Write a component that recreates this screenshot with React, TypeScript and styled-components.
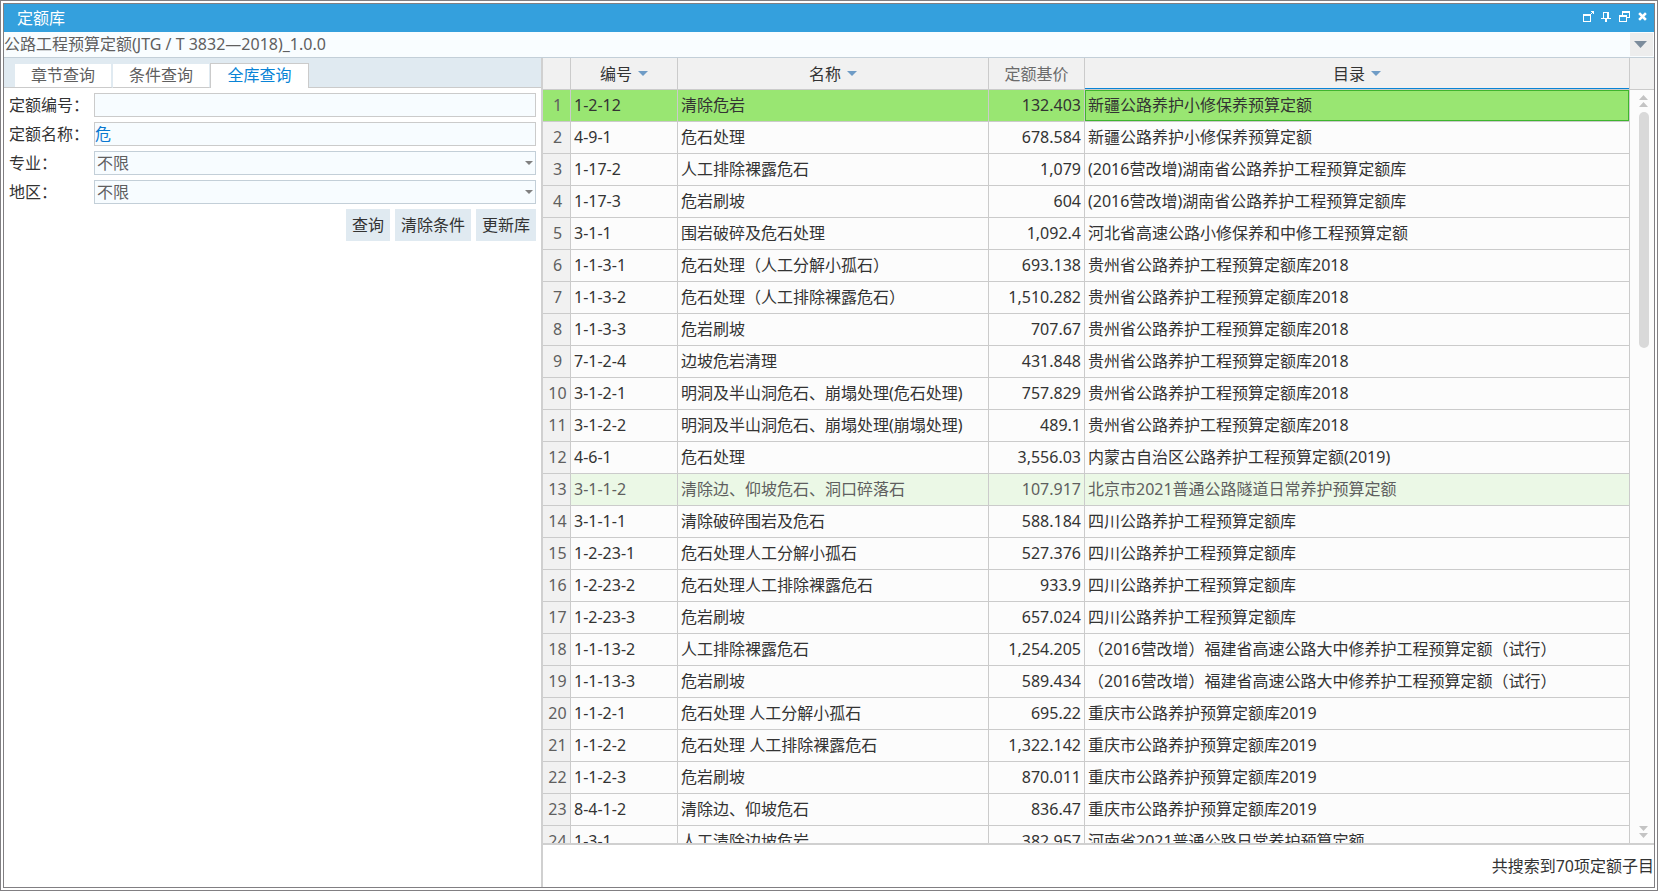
import React, { useState } from "react";
import styled, { createGlobalStyle, css } from "styled-components";

const GlobalStyle = createGlobalStyle`
  *, *::before, *::after { box-sizing: border-box; }
  html, body, #root { height: 100%; }
  body {
    margin: 0;
    background: #fff;
    color: #333;
    font: 16px/24px "Noto Sans", "Noto Sans CJK SC", sans-serif;
  }
  button, input, select { font: inherit; color: inherit; }
`;

const OuterFrame = styled.div`
  height: 100%;
  padding: 2px;
  border: 1px solid #817f82;
`;

const Window = styled.main`
  display: flex;
  flex-direction: column;
  height: 100%;
  border: 1px solid #817f82;
`;

const TitleBar = styled.header`
  display: flex;
  align-items: center;
  justify-content: space-between;
  flex: none;
  height: 28px;
  padding: 0 5px 0 13px;
  background: #34a0dd;
  color: #fff;
`;

const Title = styled.h1`
  margin: 0;
  font-size: 16px;
  font-weight: 400;
`;

const WindowButtons = styled.div`
  display: flex;
  gap: 6px;
  padding-bottom: 2px;
`;

const WindowButton = styled.button`
  display: block;
  width: 12px;
  height: 12px;
  padding: 0;
  border: 0;
  background: none;

  svg { display: block; }
`;

const LibraryPicker = styled.div`
  display: flex;
  flex: none;
  height: 26px;
  padding: 1px 1px 1px 0;
  border-bottom: 1px solid #c3cfd8;
  background: #f9fdff;
`;

const LibrarySelect = styled.select`
  flex: 1;
  height: 23px;
  padding: 0;
  border: 0;
  background: none;
  color: #5f5f5f;
  line-height: 23px;
  appearance: none;
  outline: none;
`;

const PickerButton = styled.button`
  display: grid;
  place-items: center;
  width: 23px;
  height: 23px;
  padding: 0 2px 0 0;
  border: 0;
  background: #ededed;
`;

const Body = styled.div`
  display: grid;
  grid-template-columns: minmax(0, 537fr) 2px minmax(0, 1111fr);
  flex: 1;
  min-height: 0;
`;

const Splitter = styled.div`
  background: #d0d0d0;
`;

const QueryPanel = styled.section`
  min-width: 0;
  background: #fff;
`;

const TabList = styled.div`
  display: flex;
  align-items: flex-end;
  height: 30px;
  padding-left: 11px;
  background: #e0eaf1;
  box-shadow: inset 0 -1px #cbcbcb;
`;

const Tab = styled.button<{ $active: boolean }>`
  width: 98px;
  height: 24px;
  padding: 0 0 2px;
  border: 0;
  border-right: 2px solid #e0eaf1;
  border-bottom: 1px solid #cbcbcb;
  background: #fff;
  color: #5f5f5f;
  line-height: 20px;

  ${(p) =>
    p.$active &&
    css`
      width: 99px;
      height: 25px;
      margin-left: -1px;
      border: 1px solid #cbcbcb;
      border-bottom: 0;
      color: #0a84d6;
    `}
`;

const QueryForm = styled.form`
  display: flex;
  flex-direction: column;
  gap: 5px;
  padding: 5px 5px 0;
`;

const Field = styled.div`
  display: flex;
  align-items: center;
`;

const FieldLabel = styled.label`
  flex: none;
  width: 85px;
`;

const control = css`
  width: 100%;
  height: 24px;
  border: 1px solid #cbcbcb;
  border-radius: 0;
  background: #f7fcff;
  outline: none;
`;

const TextBox = styled.input`
  ${control}
  padding: 0;
  color: #0a78d0;
`;

const SelectWrap = styled.div`
  position: relative;
  flex: 1;

  svg {
    position: absolute;
    top: 10px;
    right: 3px;
    pointer-events: none;
  }
`;

const SelectBox = styled.select`
  ${control}
  display: block;
  padding: 0 16px 0 2px;
  border-color: #c3cfd8;
  color: #5f5f5f;
  line-height: 22px;
  appearance: none;
`;

const Actions = styled.div`
  display: flex;
  justify-content: flex-end;
  gap: 5px;
`;

const ActionButton = styled.button`
  height: 32px;
  padding: 0 6px;
  border: 0;
  background: #e0eaf1;
`;

const ResultPanel = styled.section`
  display: flex;
  flex-direction: column;
  min-width: 0;
  min-height: 0;
`;

const ResultArea = styled.div`
  display: flex;
  flex: 1;
  min-height: 0;
  border-bottom: 2px solid #d0d0d0;
  background: #fcfcfc;
`;

const TableViewport = styled.div`
  flex: 1;
  min-width: 0;
  overflow: hidden;
`;

const Table = styled.table`
  width: 100%;
  border-collapse: separate;
  border-spacing: 0;
  table-layout: fixed;
`;

const HeadCell = styled.th<{ $muted?: boolean; $sorted?: boolean }>`
  height: 32px;
  padding: 0;
  border-right: 1px solid #cbcbcb;
  border-bottom: 1px solid #cbcbcb;
  background: #f1f1f1;
  box-shadow: ${(p) => (p.$sorted ? "inset 0 -1px #0a84d6" : "none")};
  color: ${(p) => (p.$muted ? "#6b6b6b" : "inherit")};
  font-weight: 400;
`;

const HeadButton = styled.button`
  display: inline-flex;
  align-items: center;
  gap: 6px;
  padding: 0;
  border: 0;
  background: none;
`;

const Cell = styled.td<{ $numeric?: boolean; $current?: boolean }>`
  height: 32px;
  padding: 0 3px 1px;
  border-right: 1px solid #cbcbcb;
  border-bottom: 1px solid #cbcbcb;
  overflow: hidden;
  text-align: ${(p) => (p.$numeric ? "right" : "left")};
  white-space: pre;
  box-shadow: ${(p) => (p.$current ? "inset 0 0 0 1px #3fb52d" : "none")};
`;

const RowNumber = styled.th`
  padding: 0 0 1px 2px;
  border-right: 1px solid #cbcbcb;
  border-bottom: 1px solid #cbcbcb;
  background: #f1f1f1;
  color: #5f5f5f;
  font-weight: 400;
  text-align: center;
`;

const Row = styled.tr<{ $state?: "selected" | "hover" }>`
  ${(p) =>
    p.$state === "selected" &&
    css`
      background: #99e672;
      ${RowNumber} { background: #99e672; }
    `}
  ${(p) =>
    p.$state === "hover" &&
    css`
      background: #ebf8e6;
      color: #5f5f5f;
    `}
`;

const ScrollRail = styled.div`
  display: flex;
  flex-direction: column;
  flex: none;
  width: 24px;
`;

const RailHead = styled.div`
  flex: none;
  height: 32px;
  border-bottom: 1px solid #cbcbcb;
  background: #f1f1f1;
`;

const RailTrack = styled.div`
  display: flex;
  flex: 1;
  flex-direction: column;
  min-height: 0;
  padding: 5px 0 5px 9px;
`;

const RailThumbArea = styled.div`
  flex: 1;
  width: 10px;
  padding: 5px 0;
`;

const RailThumb = styled.div`
  height: calc(100% / 3);
  border-radius: 5px;
  background: #d9d9d9;
`;

const StatusBar = styled.footer`
  display: flex;
  align-items: center;
  justify-content: flex-end;
  flex: none;
  height: 42px;
`;

const Triangle = ({ width, height, color }: { width: number; height: number; color: string }) => (
  <svg width={width} height={height} viewBox={`0 0 ${width} ${height}`} aria-hidden="true">
    <path d={`M0 0H${width}L${width / 2} ${height}Z`} fill={color} />
  </svg>
);

const DoubleArrow = ({ up }: { up?: boolean }) => (
  <svg width="9" height="12" viewBox="0 0 9 12" aria-hidden="true" fill="#c4c4c4">
    {up ? <path d="M0 5L4.500 0L9 5ZM0 12L4.500 7L9 12Z" /> : <path d="M0 0H9L4.500 5ZM0 7H9L4.500 12Z" />}
  </svg>
);

const windowActions = [
  {
    label: "最大化",
    icon: <path d="M0 3H8V11H0ZM1 5V10H7V5ZM8 0H11V3H10V2H9V3H8V2H9V1H8Z" fillRule="evenodd" />,
  },
  { label: "固定", icon: <path d="M2 1H8V7H10V8H6V11H4V8H0V7H2ZM3 2V7H6V2Z" fillRule="evenodd" /> },
  {
    label: "还原",
    icon: <path d="M3 0H11V7H8V6H10V2H4V4H3ZM0 4H8V11H0ZM1 6V10H7V6Z" fillRule="evenodd" />,
  },
  { label: "关闭", icon: <path d="M3 3L8 8M8 3L3 8" stroke="#fff" strokeWidth="2.500" strokeLinecap="square" fill="none" /> },
];

const tabs = ["章节查询", "条件查询", "全库查询"];

const columns = [
  { title: "编号", width: 107, filter: true },
  { title: "名称", width: 311, filter: true },
  { title: "定额基价", width: 96, filter: false },
  { title: "目录", width: undefined, filter: true },
];

const rows: [string, string, string, string][] = [
  ["1-2-12", "清除危岩", "132.403", "新疆公路养护小修保养预算定额"],
  ["4-9-1", "危石处理", "678.584", "新疆公路养护小修保养预算定额"],
  ["1-17-2", "人工排除裸露危石", "1,079", "(2016营改增)湖南省公路养护工程预算定额库"],
  ["1-17-3", "危岩刷坡", "604", "(2016营改增)湖南省公路养护工程预算定额库"],
  ["3-1-1", "围岩破碎及危石处理", "1,092.4", "河北省高速公路小修保养和中修工程预算定额"],
  ["1-1-3-1", "危石处理（人工分解小孤石）", "693.138", "贵州省公路养护工程预算定额库2018"],
  ["1-1-3-2", "危石处理（人工排除裸露危石）", "1,510.282", "贵州省公路养护工程预算定额库2018"],
  ["1-1-3-3", "危岩刷坡", "707.67", "贵州省公路养护工程预算定额库2018"],
  ["7-1-2-4", "边坡危岩清理", "431.848", "贵州省公路养护工程预算定额库2018"],
  ["3-1-2-1", "明洞及半山洞危石、崩塌处理(危石处理)", "757.829", "贵州省公路养护工程预算定额库2018"],
  ["3-1-2-2", "明洞及半山洞危石、崩塌处理(崩塌处理)", "489.1", "贵州省公路养护工程预算定额库2018"],
  ["4-6-1", "危石处理", "3,556.03", "内蒙古自治区公路养护工程预算定额(2019)"],
  ["3-1-1-2", "清除边、仰坡危石、洞口碎落石", "107.917", "北京市2021普通公路隧道日常养护预算定额"],
  ["3-1-1-1", "清除破碎围岩及危石", "588.184", "四川公路养护工程预算定额库"],
  ["1-2-23-1", "危石处理人工分解小孤石", "527.376", "四川公路养护工程预算定额库"],
  ["1-2-23-2", "危石处理人工排除裸露危石", "933.9", "四川公路养护工程预算定额库"],
  ["1-2-23-3", "危岩刷坡", "657.024", "四川公路养护工程预算定额库"],
  ["1-1-13-2", "人工排除裸露危石", "1,254.205", "（2016营改增）福建省高速公路大中修养护工程预算定额（试行）"],
  ["1-1-13-3", "危岩刷坡", "589.434", "（2016营改增）福建省高速公路大中修养护工程预算定额（试行）"],
  ["1-1-2-1", "危石处理 人工分解小孤石", "695.22", "重庆市公路养护预算定额库2019"],
  ["1-1-2-2", "危石处理 人工排除裸露危石", "1,322.142", "重庆市公路养护预算定额库2019"],
  ["1-1-2-3", "危岩刷坡", "870.011", "重庆市公路养护预算定额库2019"],
  ["8-4-1-2", "清除边、仰坡危石", "836.47", "重庆市公路养护预算定额库2019"],
  ["1-3-1", "人工清除边坡危岩", "382.957", "河南省2021普通公路日常养护预算定额"],
];

export default function App() {
  const [activeTab, setActiveTab] = useState(2);
  const [selected, setSelected] = useState(0);
  const [code, setCode] = useState("");
  const [name, setName] = useState("危");

  return (
    <>
      <GlobalStyle />
      <OuterFrame>
        <Window>
          <TitleBar>
            <Title>定额库</Title>
            <WindowButtons>
              {windowActions.map((action) => (
                <WindowButton key={action.label} type="button" aria-label={action.label}>
                  <svg width="12" height="12" viewBox="0 0 12 12" fill="#fff">
                    {action.icon}
                  </svg>
                </WindowButton>
              ))}
            </WindowButtons>
          </TitleBar>

          <LibraryPicker>
            <LibrarySelect aria-label="定额库版本">
              <option>公路工程预算定额(JTG / T 3832—2018)_1.0.0</option>
            </LibrarySelect>
            <PickerButton type="button" aria-label="展开">
              <Triangle width={13} height={7} color="#7c8c9c" />
            </PickerButton>
          </LibraryPicker>

          <Body>
            <QueryPanel>
              <TabList role="tablist">
                {tabs.map((tab, i) => (
                  <Tab
                    key={tab}
                    type="button"
                    role="tab"
                    aria-selected={i === activeTab}
                    $active={i === activeTab}
                    onClick={() => setActiveTab(i)}
                  >
                    {tab}
                  </Tab>
                ))}
              </TabList>
              <QueryForm onSubmit={(e) => e.preventDefault()}>
                <Field>
                  <FieldLabel htmlFor="code">定额编号：</FieldLabel>
                  <TextBox id="code" value={code} onChange={(e) => setCode(e.target.value)} />
                </Field>
                <Field>
                  <FieldLabel htmlFor="name">定额名称：</FieldLabel>
                  <TextBox id="name" value={name} onChange={(e) => setName(e.target.value)} />
                </Field>
                <Field>
                  <FieldLabel htmlFor="major">专业：</FieldLabel>
                  <SelectWrap>
                    <SelectBox id="major">
                      <option>不限</option>
                    </SelectBox>
                    <Triangle width={8} height={4} color="#808080" />
                  </SelectWrap>
                </Field>
                <Field>
                  <FieldLabel htmlFor="region">地区：</FieldLabel>
                  <SelectWrap>
                    <SelectBox id="region">
                      <option>不限</option>
                    </SelectBox>
                    <Triangle width={8} height={4} color="#808080" />
                  </SelectWrap>
                </Field>
                <Actions>
                  <ActionButton type="submit">查询</ActionButton>
                  <ActionButton type="button" onClick={() => { setCode(""); setName(""); }}>
                    清除条件
                  </ActionButton>
                  <ActionButton type="button">更新库</ActionButton>
                </Actions>
              </QueryForm>
            </QueryPanel>

            <Splitter />

            <ResultPanel>
              <ResultArea>
                <TableViewport>
                  <Table>
                    <colgroup>
                      <col width={28} />
                      {columns.map((c) => (
                        <col key={c.title} width={c.width} />
                      ))}
                    </colgroup>
                    <thead>
                      <tr>
                        <HeadCell aria-label="序号" />
                        {columns.map((c) => (
                          <HeadCell key={c.title} scope="col" $muted={!c.filter} $sorted={c.title === "目录"}>
                            {c.filter ? (
                              <HeadButton type="button">
                                {c.title}
                                <Triangle width={10} height={5} color="#6f9cc6" />
                              </HeadButton>
                            ) : (
                              c.title
                            )}
                          </HeadCell>
                        ))}
                      </tr>
                    </thead>
                    <tbody>
                      {rows.map(([no, title, price, catalog], i) => (
                        <Row
                          key={i}
                          $state={i === selected ? "selected" : i === 12 ? "hover" : undefined}
                          onClick={() => setSelected(i)}
                        >
                          <RowNumber scope="row">{i + 1}</RowNumber>
                          <Cell>{no}</Cell>
                          <Cell>{title}</Cell>
                          <Cell $numeric>{price}</Cell>
                          <Cell $current={i === selected}>{catalog}</Cell>
                        </Row>
                      ))}
                    </tbody>
                  </Table>
                </TableViewport>
                <ScrollRail>
                  <RailHead />
                  <RailTrack>
                    <DoubleArrow up />
                    <RailThumbArea>
                      <RailThumb />
                    </RailThumbArea>
                    <DoubleArrow />
                  </RailTrack>
                </ScrollRail>
              </ResultArea>
              <StatusBar>共搜索到70项定额子目</StatusBar>
            </ResultPanel>
          </Body>
        </Window>
      </OuterFrame>
    </>
  );
}
